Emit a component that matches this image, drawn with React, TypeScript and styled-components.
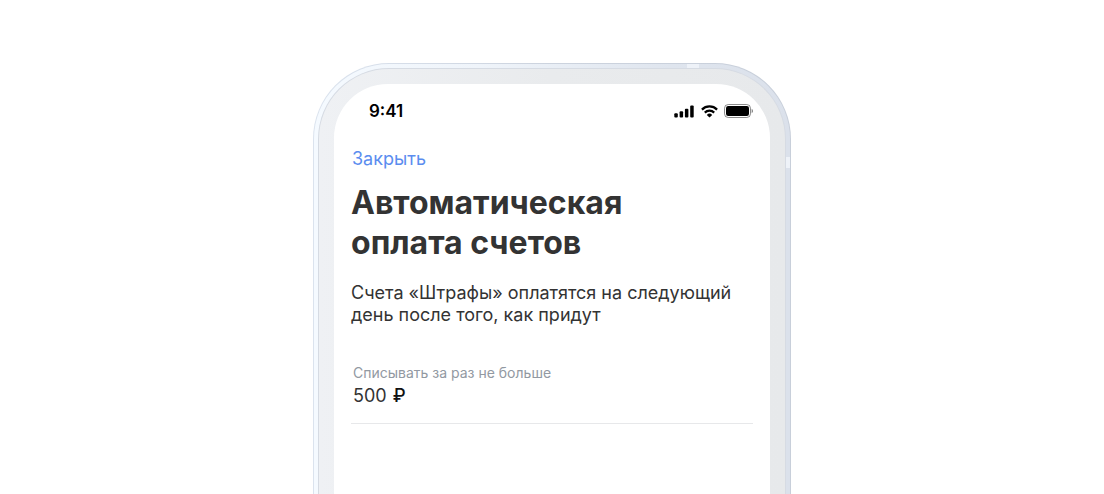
import React from "react";
import styled, { createGlobalStyle } from "styled-components";

const GlobalStyle = createGlobalStyle`
  * { box-sizing: border-box; }
  body {
    margin: 0;
    background: #fff;
    color: #333;
    font-family: Inter, "Liberation Sans", sans-serif;
  }
`;

const Stage = styled.main`
  display: flex;
  justify-content: center;
  min-height: 100vh;
  padding-top: 63px;
`;

const Rim = styled.div`
  position: relative;
  display: flex;
  width: 100%;
  max-width: 478px;
  padding: 1px 1px 0;
  border-radius: 76px 76px 0 0;
  background: linear-gradient(90deg, #dbe3ee, #ccd3de 50%, #c8cfda);
`;

const Edge = styled.div`
  display: flex;
  flex: 1;
  min-width: 0;
  padding: 4px 4px 0;
  border-radius: 75px 75px 0 0;
  background: linear-gradient(90deg, #f5faff 0%, #eff4fa 35%, #dfe5ee 75%, #dbe1eb 100%);
`;

const Bezel = styled.div`
  display: flex;
  flex: 1;
  min-width: 0;
  padding: 15px 15px 0;
  border: 1px solid #d6dbe3;
  border-bottom: 0;
  border-radius: 71px 71px 0 0;
  background: linear-gradient(90deg, #eff1f4, #e9ebed 50%, #e7e9eb);
`;

const Screen = styled.div`
  flex: 1;
  min-width: 0;
  padding: 16px 17px 0;
  border-radius: 54px 54px 0 0;
  background: #fff;
`;

const Antenna = styled.span<{ $side: "top" | "right" }>`
  position: absolute;
  background: #eef2f8;
  ${({ $side }) =>
    $side === "top"
      ? "top: 1px; right: 92px; width: 12px; height: 4px;"
      : "top: 94px; right: 1px; width: 4px; height: 11px;"}
`;

const StatusBar = styled.header`
  display: flex;
  align-items: center;
  justify-content: space-between;
  height: 22px;
  padding-left: 18px;
  color: #000;
`;

const Clock = styled.time`
  font-size: 17px;
  font-weight: 600;
  line-height: 22px;
`;

const StatusIcons = styled.div`
  display: flex;
  align-items: center;
  gap: 6px;
  svg { display: block; }
`;

const CloseButton = styled.button`
  display: block;
  margin: 25px 0 0;
  padding: 0 1px;
  border: 0;
  background: none;
  color: #5b8def;
  font: inherit;
  font-size: 18px;
  line-height: 24px;
  cursor: pointer;
`;

const Title = styled.h1`
  max-width: 320px;
  margin: 12px 0 0;
  font-size: 32px;
  font-weight: 700;
  line-height: 40px;
`;

const Description = styled.p`
  margin: 19px 0 0;
  font-size: 18px;
  line-height: 22px;
`;

const Field = styled.div`
  margin-top: 38px;
  padding: 0 2px 15px;
  border-bottom: 1px solid #e7e8ea;
`;

const FieldLabel = styled.label`
  display: block;
  color: #9299a2;
  font-size: 14px;
  line-height: 18px;
`;

const Amount = styled.div`
  display: flex;
  align-items: center;
  gap: 6px;
  margin-top: 2px;
  font-size: 18px;
  line-height: 24px;
`;

const AmountInput = styled.input`
  field-sizing: content;
  height: 24px;
  padding: 0;
  border: 0;
  outline: 0;
  background: none;
  color: inherit;
  font: inherit;
`;

const Currency = styled.span`
  color: #111;
  font-weight: 500;
`;

const Signal = () => (
  <svg width="20" height="13" viewBox="0 0 20 13" aria-hidden="true">
    <rect x="0.3" y="8.2" width="3.5" height="4.3" rx="1" />
    <rect x="5.6" y="6.2" width="3.5" height="6.3" rx="1" />
    <rect x="10.9" y="3.7" width="3.5" height="8.8" rx="1" />
    <rect x="16.2" y="0.5" width="3.5" height="12" rx="1" />
  </svg>
);

const Wifi = () => (
  <svg width="18" height="13" viewBox="-1 0 18 13" aria-hidden="true">
    <g fill="none" stroke="#000" strokeWidth="2.2">
      <path d="M0.9 4.6a10.8 10.8 0 0 1 15.2 0" />
      <path d="M3.8 7.6a6.7 6.7 0 0 1 9.4 0" />
    </g>
    <path d="M8.5 12.6 5.8 9.9a3.9 3.9 0 0 1 5.4 0Z" />
  </svg>
);

const Battery = () => (
  <svg width="29" height="14" viewBox="0 0 29 14" aria-hidden="true">
    <rect x="0.5" y="0.5" width="26" height="13" rx="3.8" fill="none" stroke="#000" strokeOpacity="0.45" />
    <rect x="2" y="2" width="23" height="10" rx="2.2" />
    <path d="M27.6 4.8a2.4 2.4 0 0 1 0 4.4Z" fillOpacity="0.45" />
  </svg>
);

export default function App() {
  const [amount, setAmount] = React.useState("500");

  return (
    <>
      <GlobalStyle />
      <Stage>
        <Rim>
          <Edge>
            <Bezel>
              <Screen>
                <StatusBar>
                  <Clock>9:41</Clock>
                  <StatusIcons>
                    <Signal />
                    <Wifi />
                    <Battery />
                  </StatusIcons>
                </StatusBar>
                <CloseButton type="button">Закрыть</CloseButton>
                <Title>Автоматическая оплата счетов</Title>
                <Description>Счета «Штрафы» оплатятся на следующий день после того, как придут</Description>
                <Field>
                  <FieldLabel htmlFor="limit">Списывать за раз не больше</FieldLabel>
                  <Amount>
                    <AmountInput
                      id="limit"
                      inputMode="numeric"
                      value={amount}
                      onChange={(event) => setAmount(event.target.value)}
                    />
                    <Currency>₽</Currency>
                  </Amount>
                </Field>
              </Screen>
            </Bezel>
          </Edge>
          <Antenna $side="top" />
          <Antenna $side="right" />
        </Rim>
      </Stage>
    </>
  );
}
